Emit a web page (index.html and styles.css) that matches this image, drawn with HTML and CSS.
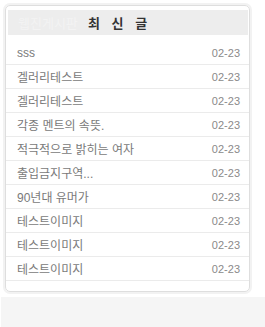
FILE: index.html
```html
<!DOCTYPE html>
<html lang="ko">
<head>
  <meta charset="UTF-8" />
  <meta name="viewport" content="width=device-width, initial-scale=1.0"/>
  <title>최신글</title>
  <link rel="stylesheet" href="styles.css">
</head>
<body>
  <div class="latest">
    <div class="latest-head">
      <span class="tab-ghost">웹진게시판</span>
      <h2>최 신 글</h2>
    </div>
    <ul class="latest-list">
      <li><a href="#">sss</a><span class="date">02-23</span></li>
      <li><a href="#">겔러리테스트</a><span class="date">02-23</span></li>
      <li><a href="#">겔러리테스트</a><span class="date">02-23</span></li>
      <li><a href="#">각종 멘트의 속뜻.</a><span class="date">02-23</span></li>
      <li><a href="#">적극적으로 밝히는 여자</a><span class="date">02-23</span></li>
      <li><a href="#">출입금지구역...</a><span class="date">02-23</span></li>
      <li><a href="#">90년대 유머가</a><span class="date">02-23</span></li>
      <li><a href="#">테스트이미지</a><span class="date">02-23</span></li>
      <li><a href="#">테스트이미지</a><span class="date">02-23</span></li>
      <li><a href="#">테스트이미지</a><span class="date">02-23</span></li>
    </ul>
  </div>
  <div class="footer-band"></div>
</body>
</html>
```

FILE: styles.css
```css
body {
  margin: 0;
  background: #fff;
  font-family: "Liberation Sans", "Noto Sans CJK KR", sans-serif;
  font-size: 12px;
}
.latest {
  margin: 5px 0 0 5px;
  width: 240px;
  border: 1px solid #dedede;
  border-radius: 5px;
  box-shadow: 0 0 0 2px #f2f2f2;
  padding: 4px 1px 10px 2px;
}
.latest-head {
  display: flex;
  align-items: center;
  height: 25px;
  background: #ededed;
  padding-left: 10px;
}
.tab-ghost {
  font-size: 13px;
  color: #f3f3f3;
  width: 70px;
}
.latest-head h2 {
  margin: 0;
  font-size: 13px;
  font-weight: bold;
  color: #333;
  letter-spacing: 4px;
}
.latest-list {
  list-style: none;
  margin: 6px -1px 0 -2px;
  padding: 0;
}
.latest-list li {
  display: flex;
  align-items: center;
  justify-content: space-between;
  height: 23px;
  border-bottom: 1px solid #ebebeb;
  padding: 0 9px 0 11px;
}
.latest-list a {
  color: #7a7a7a;
  text-decoration: none;
}
.latest-list .date {
  font-size: 11px;
  color: #8a8a8a;
}
.footer-band {
  margin: 5px 0 0 1px;
  height: 40px;
  background: #f5f5f5;
}
```
